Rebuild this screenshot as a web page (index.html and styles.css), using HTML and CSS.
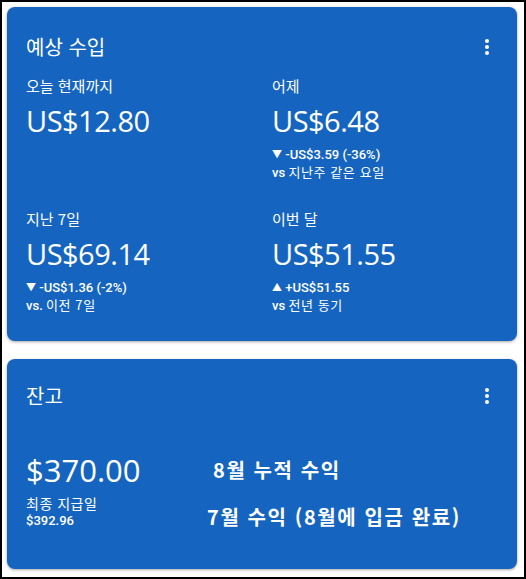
FILE: index.html
```html
<!DOCTYPE html>
<html lang="ko">
<head>
    <meta charset="UTF-8">
    <meta name="viewport" content="width=device-width, initial-scale=1.0">
    <title>수입</title>
    <link rel="stylesheet" href="styles.css">
</head>
<body>
    <div class="frame">

        <section class="card earnings">
            <div class="card-head">
                <h2>예상 수입</h2>
                <span class="kebab"><i></i><i></i><i></i></span>
            </div>
            <div class="grid">
                <div class="stat">
                    <div class="label">오늘 현재까지</div>
                    <div class="amount">US$12.80</div>
                </div>
                <div class="stat">
                    <div class="label">어제</div>
                    <div class="amount">US$6.48</div>
                    <div class="delta"><span class="tri">▼</span> -US$3.59 (-36%)</div>
                    <div class="delta">vs <span class="ko">지난주 같은 요일</span></div>
                </div>
                <div class="stat">
                    <div class="label">지난 7일</div>
                    <div class="amount">US$69.14</div>
                    <div class="delta"><span class="tri">▼</span> -US$1.36 (-2%)</div>
                    <div class="delta">vs. <span class="ko">이전 7일</span></div>
                </div>
                <div class="stat">
                    <div class="label">이번 달</div>
                    <div class="amount">US$51.55</div>
                    <div class="delta"><span class="tri">▲</span> +US$51.55</div>
                    <div class="delta">vs <span class="ko">전년 동기</span></div>
                </div>
            </div>
        </section>

        <section class="card balance">
            <div class="card-head">
                <h2>잔고</h2>
                <span class="kebab"><i></i><i></i><i></i></span>
            </div>
            <div class="balance-row">
                <div class="stat">
                    <div class="amount big">$370.00</div>
                    <div class="label small">최종 지급일</div>
                    <div class="delta">$392.96</div>
                </div>
                <div class="notes">
                    <p class="note first">8월 누적 수익</p>
                    <p class="note">7월 수익 (8월에 입금 완료)</p>
                </div>
            </div>
        </section>

    </div>
</body>
</html>
```

FILE: styles.css
```css
html, body {
    margin: 0;
    padding: 0;
}
body {
    font-family: Roboto, "Noto Sans CJK KR", sans-serif;
    background: #fff;
    color: #fff;
}
.frame {
    width: 526px;
    height: 579px;
    box-sizing: border-box;
    border: 2px solid #000;
    padding: 5px 7px 0 5px;
    display: flex;
    flex-direction: column;
    gap: 18px;
}
.card {
    background: #1565c0;
    border-radius: 8px;
    box-shadow: 0 1px 3px rgba(0, 0, 0, 0.35);
    padding: 0 19px;
}
.earnings {
    height: 334px;
    box-sizing: border-box;
    padding-top: 28px;
}
.balance {
    height: 210px;
    box-sizing: border-box;
    padding-top: 25px;
}
.card-head {
    display: flex;
    justify-content: space-between;
    align-items: center;
}
h2 {
    margin: 0;
    font-family: "Noto Sans CJK KR", sans-serif;
    font-size: 20px;
    font-weight: 400;
    line-height: 24px;
}
.kebab {
    display: flex;
    flex-direction: column;
    gap: 2px;
    margin-right: 9px;
}
.kebab i {
    width: 4px;
    height: 4px;
    border-radius: 50%;
    background: #fff;
}
.grid {
    display: grid;
    grid-template-columns: 246px 1fr;
    row-gap: 28px;
    margin-top: 17px;
}
.label {
    font-family: "Noto Sans CJK KR", sans-serif;
    font-size: 15px;
    line-height: 20px;
}
.amount {
    font-family: "Open Sans", sans-serif;
    font-size: 29px;
    line-height: 40px;
    margin-top: 5px;
    margin-bottom: 5px;
    letter-spacing: -0.5px;
}
.delta {
    font-family: Roboto, "Noto Sans CJK KR", sans-serif;
    font-size: 13px;
    font-weight: 500;
    line-height: 17px;
}
.tri {
    font-size: 10px;
    vertical-align: 1px;
}
.ko {
    font-family: "Noto Sans CJK KR", sans-serif;
    font-weight: 400;
    letter-spacing: 0.6px;
}
.balance-row {
    display: flex;
    margin-top: 42px;
}
.balance-row .stat {
    width: 181px;
}
.amount.big {
    font-size: 31px;
    letter-spacing: 0;
    margin: 0 0 4px;
}
.label.small {
    font-size: 14px;
    line-height: 18px;
    letter-spacing: 0.5px;
}
.notes {
    padding-top: 7px;
}
.note {
    margin: 0;
    font-family: "Noto Sans CJK KR", sans-serif;
    font-size: 20px;
    font-weight: 700;
    line-height: 26px;
    letter-spacing: 1.6px;
}
.note.first {
    margin-left: 6px;
    margin-bottom: 21px;
}
```
